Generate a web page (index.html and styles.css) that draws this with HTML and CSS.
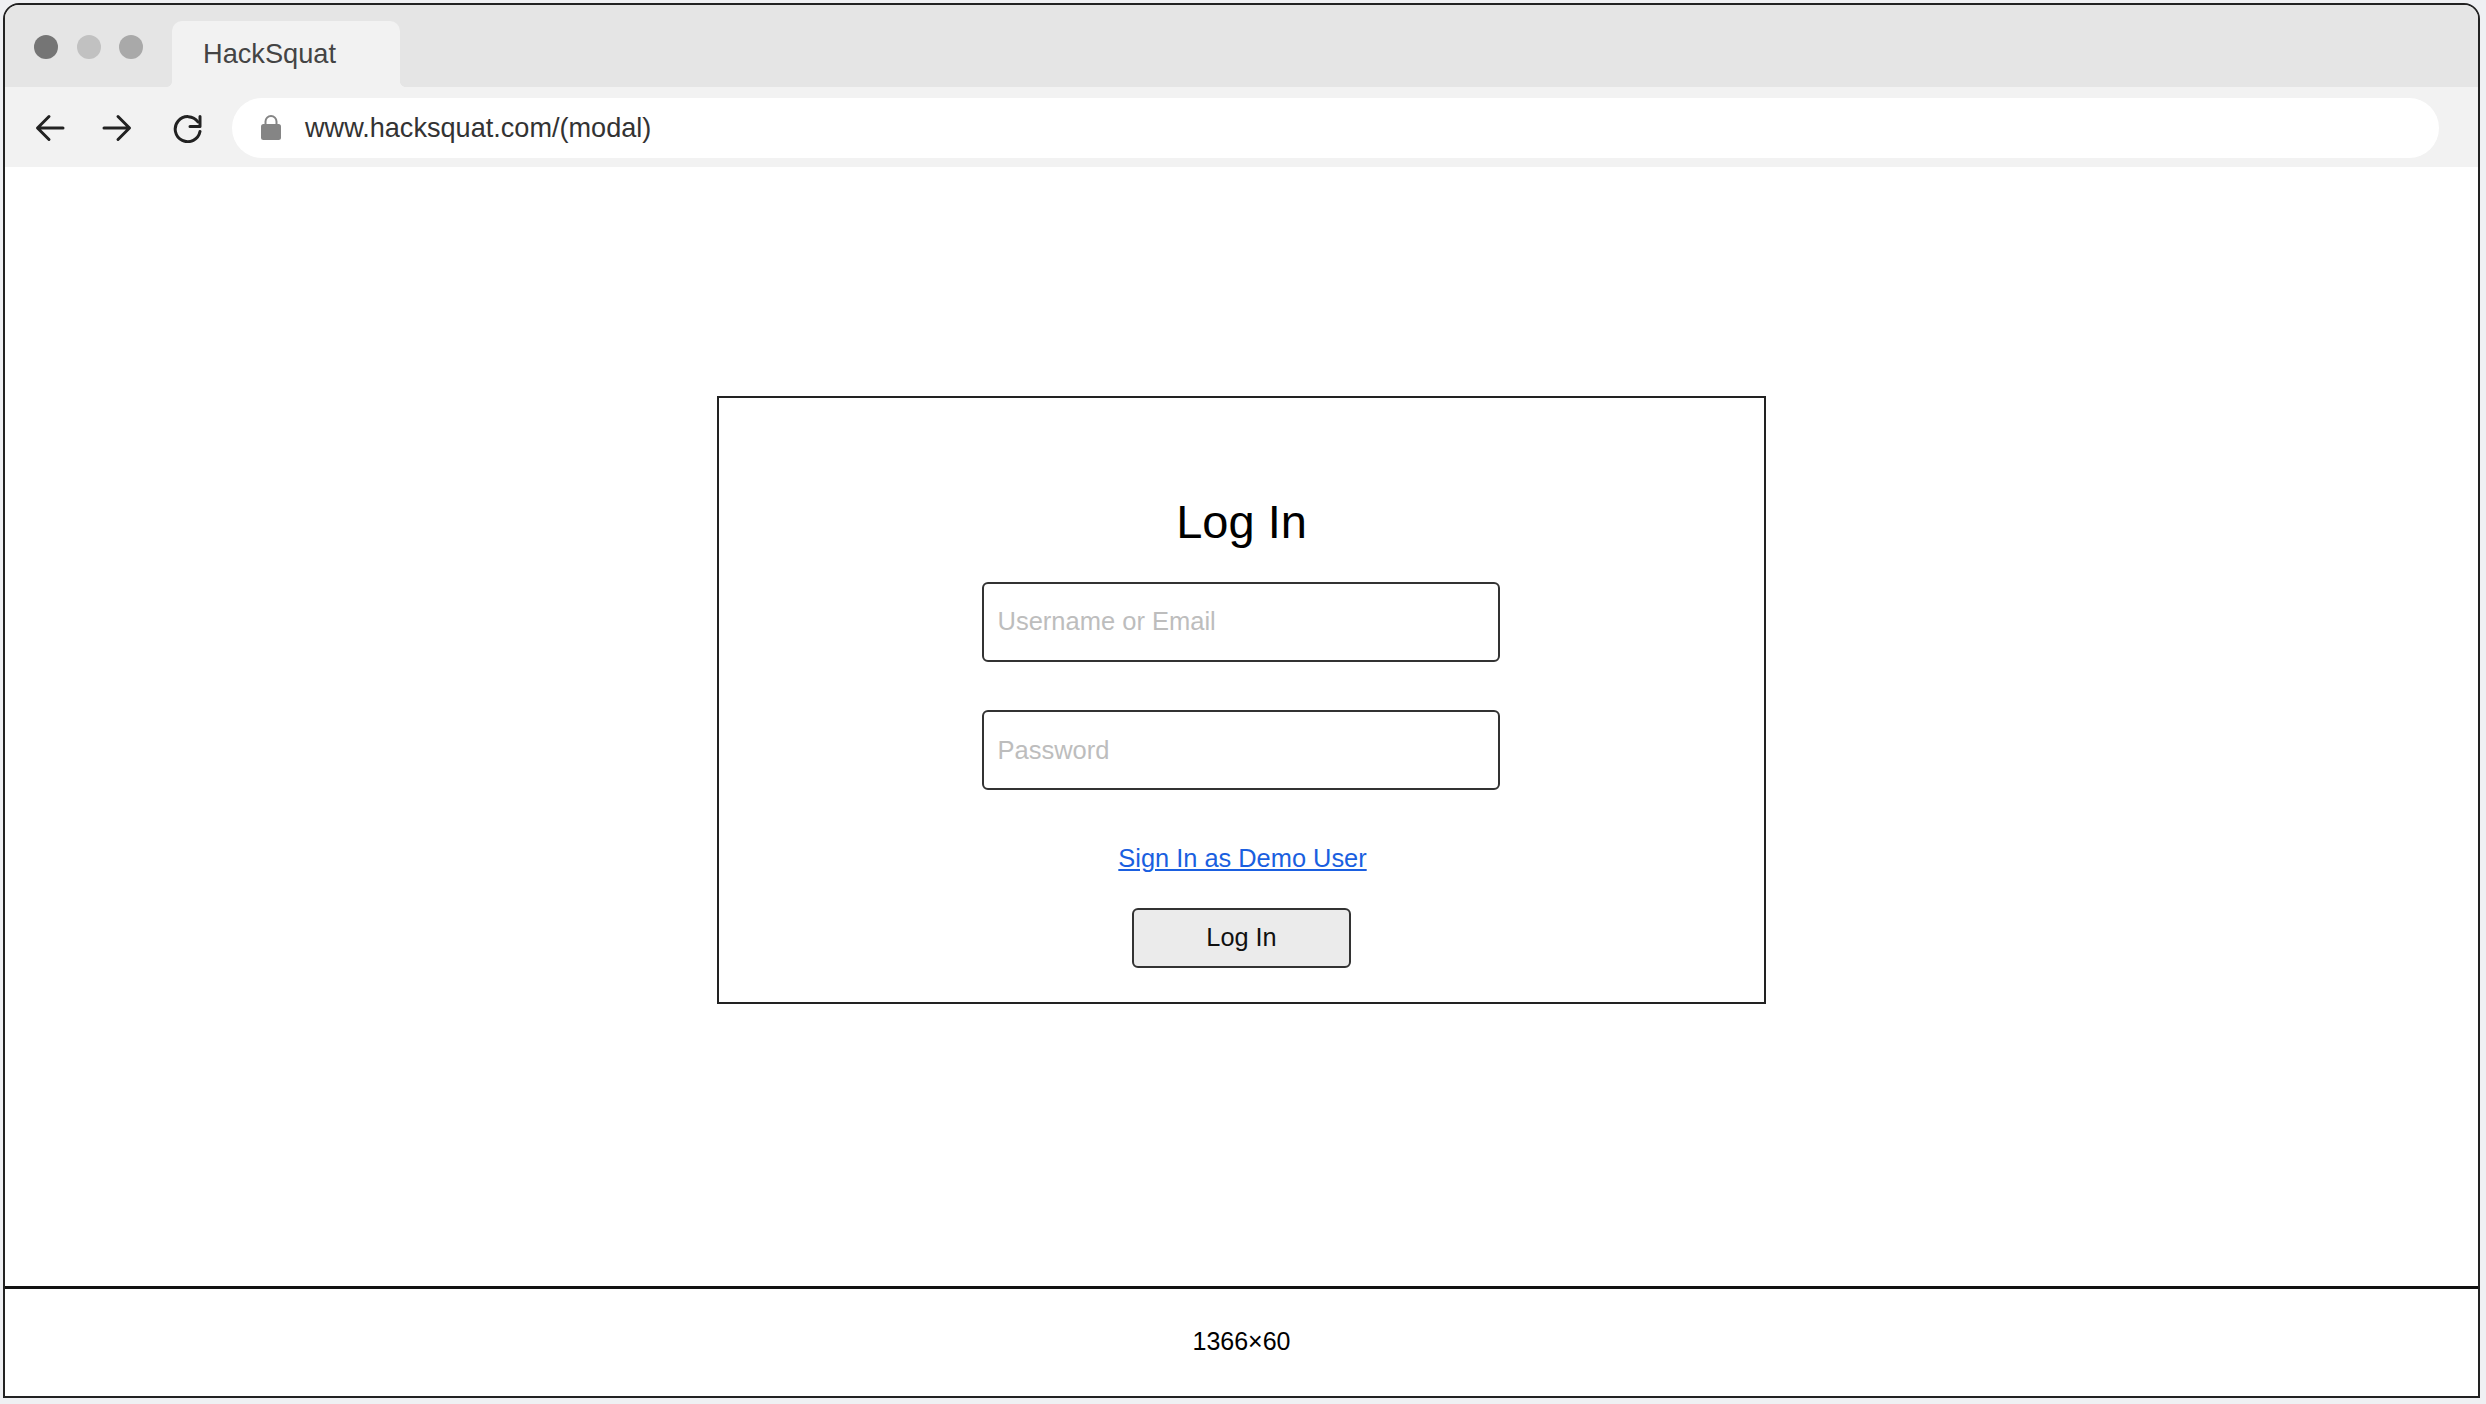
FILE: index.html
```html
<!DOCTYPE html>
<html lang="en">
<head>
<meta charset="utf-8">
<title>HackSquat</title>
<link rel="stylesheet" href="styles.css">
</head>
<body>
<div class="window">
  <header class="tabbar">
    <div class="dots">
      <span class="dot dot-dark"></span>
      <span class="dot dot-light"></span>
      <span class="dot dot-mid"></span>
    </div>
    <div class="tab">HackSquat</div>
  </header>
  <nav class="toolbar">
    <svg class="nav-icon icon-back" viewBox="0 0 30 30" aria-hidden="true"><path d="M28 15H3M14 3.500 2.500 15 14 26.500"/></svg>
    <svg class="nav-icon icon-forward" viewBox="0 0 30 30" aria-hidden="true"><path d="M2 15h25M16 3.500 27.500 15 16 26.500"/></svg>
    <svg class="nav-icon icon-reload" viewBox="0 0 30 30" aria-hidden="true"><path d="M25 9A12.500 12.500 0 1 0 27 18.500"/><path d="M27 3.500v10H17"/></svg>
    <div class="address">
      <svg class="lock" viewBox="0 0 20 26" aria-hidden="true"><path class="shackle" d="M4.500 11V6.500a5.500 5.500 0 0 1 11 0V11"/><rect class="lock-body" x="0" y="9" width="20" height="16" rx="2.500"/></svg>
      <span class="url">www.hacksquat.com/(modal)</span>
    </div>
  </nav>
  <main class="content">
    <section class="card">
      <h1 class="title">Log In</h1>
      <input class="field field-user" type="text" placeholder="Username or Email">
      <input class="field field-pass" type="password" placeholder="Password">
      <a class="demo-link" href="#">Sign In as Demo User</a>
      <button class="submit" type="button">Log In</button>
    </section>
  </main>
  <footer class="footer">1366×60</footer>
</div>
</body>
</html>
```
FILE: styles.css
```css
* {
  box-sizing: border-box;
}

html,
body {
  height: 100%;
}

body {
  margin: 0;
  padding: 3px 6px 6px 3px;
  background: #eff0f3;
  font-family: "Liberation Sans", Arial, sans-serif;
  overflow: hidden;
}

.window {
  display: flex;
  flex-direction: column;
  height: 100%;
  border: 2px solid #222;
  border-radius: 16px 16px 0 0;
  background: #fff;
  overflow: hidden;
}

.tabbar {
  display: flex;
  align-items: flex-end;
  flex: none;
  height: 82px;
  padding-left: 29px;
  background: #e5e5e5;
}

.dots {
  display: flex;
  gap: 18.500px;
  align-self: flex-start;
  margin-top: 29.500px;
}

.dot {
  width: 24px;
  height: 24px;
  border-radius: 50%;
}

.dot-dark {
  background: #757575;
}

.dot-light {
  background: #c1c1c1;
}

.dot-mid {
  background: #a9a9a9;
}

.tab {
  position: relative;
  width: 228px;
  height: 66px;
  margin-left: 29px;
  padding: 17px 0 0 31px;
  border-radius: 10px 10px 0 0;
  background: #f2f2f2;
  color: #444;
  font-size: 27.200px;
  line-height: 31px;
}

.tab::before,
.tab::after {
  content: "";
  position: absolute;
  bottom: 0;
  width: 5px;
  height: 5px;
}

.tab::before {
  left: -5px;
  background: radial-gradient(circle at 0 0, #e5e5e5 4.500px, #f2f2f2 5px);
}

.tab::after {
  right: -5px;
  background: radial-gradient(circle at 100% 0, #e5e5e5 4.500px, #f2f2f2 5px);
}

.toolbar {
  display: flex;
  align-items: flex-start;
  flex: none;
  height: 80px;
  padding: 11px 39px 0 30px;
  background: #f2f2f2;
}

.nav-icon {
  flex: none;
  width: 30px;
  height: 30px;
  margin-top: 15px;
  fill: none;
  stroke: #222;
  stroke-width: 3;
  stroke-linecap: round;
  stroke-linejoin: round;
}

.icon-forward {
  margin-left: 37px;
}

.icon-reload {
  margin-left: 41px;
}

.address {
  display: flex;
  align-items: center;
  flex: 1;
  height: 60px;
  margin-left: 29px;
  padding-left: 29px;
  border-radius: 30px;
  background: #fff;
}

.lock {
  flex: none;
  width: 20px;
  height: 26px;
}

.shackle {
  fill: none;
  stroke: #858585;
  stroke-width: 2;
}

.lock-body {
  fill: #858585;
}

.url {
  margin-left: 24px;
  padding-bottom: 2px;
  color: #333;
  font-size: 27.100px;
  line-height: 31px;
}

.content {
  display: flex;
  justify-content: center;
  flex: 1;
  min-height: 0;
  padding-top: 229px;
}

.card {
  display: flex;
  flex-direction: column;
  align-items: center;
  width: 1049px;
  height: 608px;
  border: 2px solid #222;
}

.title {
  margin: 97px 0 0;
  color: #000;
  font-size: 47px;
  font-weight: 400;
  line-height: 53px;
}

.field {
  display: block;
  width: 518px;
  height: 80px;
  margin-right: 2px;
  padding: 0 14px 2px;
  border: 2px solid #333;
  border-radius: 6px;
  background: #fff;
  color: #000;
  font-family: inherit;
  font-size: 25.500px;
}

.field::placeholder {
  color: #bdbdbd;
  opacity: 1;
}

.field-user {
  margin-top: 34px;
}

.field-pass {
  margin-top: 48px;
  padding-bottom: 0;
}

.demo-link {
  margin-top: 53px;
  margin-left: 2px;
  color: #1a5fe0;
  font-size: 25.400px;
  line-height: 30px;
}

.submit {
  width: 219px;
  height: 60px;
  margin-top: 35px;
  padding: 0 0 2px;
  border: 2px solid #333;
  border-radius: 6px;
  background: #ebebeb;
  color: #111;
  font-family: inherit;
  font-size: 25.300px;
}

.footer {
  flex: none;
  height: 110px;
  padding-top: 38px;
  border-top: 3px solid #111;
  color: #000;
  font-size: 25px;
  line-height: 29px;
  text-align: center;
}
```
